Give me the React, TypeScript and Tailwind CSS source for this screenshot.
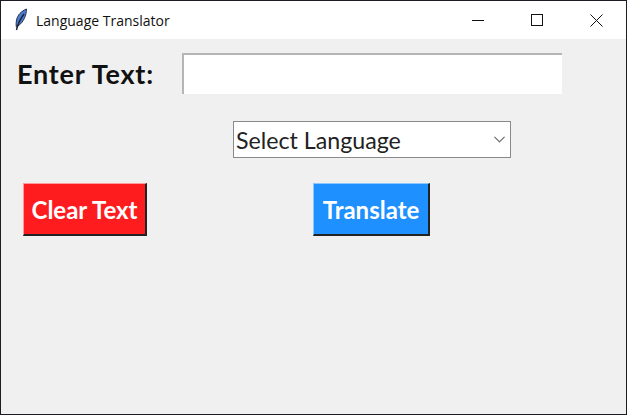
import { ChevronDown } from "lucide-react";

function Feather() {
  return (
    <svg width="16" height="24" viewBox="0 0 16 24">
      <path d="M13.500 1C8.500 3 4.500 7 3.500 12c-.5 2.500-.5 5-.2 7l3-2C10 14 13.500 8 13.500 1z" fill="#4a7bd0" stroke="#2a3450" strokeWidth="1" />
      <path d="M11 6C8 10 5 15 3.500 22" fill="none" stroke="#1c2233" strokeWidth="1.400" />
    </svg>
  );
}

export default function App() {
  return (
    <div className="w-[627px] h-[415px] overflow-hidden flex flex-col border border-[#1c1c24] bg-[#f0f0f0] font-['Lato',sans-serif]">
      {/* title bar */}
      <div className="h-[38px] shrink-0 bg-white flex items-center pl-[12px]">
        <Feather />
        <span className="ml-[7px] text-[14px] text-[#111] font-['Open_Sans',sans-serif]">Language Translator</span>
        <div className="ml-auto flex items-center">
          <svg width="12" height="12" viewBox="0 0 12 12" className="mr-[47px]">
            <path d="M0 6.500h12" stroke="#111" strokeWidth="1" />
          </svg>
          <svg width="12" height="12" viewBox="0 0 12 12" className="mr-[47px]">
            <rect x="0.500" y="0.500" width="11" height="11" fill="none" stroke="#111" strokeWidth="1" />
          </svg>
          <svg width="13" height="13" viewBox="0 0 13 13" className="mr-[23px]">
            <path d="M.5.5l12 12M12.500.5l-12 12" stroke="#111" strokeWidth="1" />
          </svg>
        </div>
      </div>

      {/* form */}
      <div className="flex flex-col pt-[14px]">
        <div className="flex items-center">
          <span className="ml-[16px] w-[165px] text-[27px] tracking-[0.8px] leading-[32px] font-bold text-[#111]">Enter Text:</span>
          <div className="w-[380px] h-[41px] bg-white border-t-2 border-l-2 border-[#b5b5b5]" />
        </div>

        <div className="ml-[232px] mt-[27px] w-[278px] h-[37px] bg-white border border-[#8a8a8a] flex items-center pl-[2px] pr-[1px]">
          <span className="text-[23.2px] leading-[30px] text-[#222]">Select Language</span>
          <ChevronDown size={19} strokeWidth={1.4} className="ml-auto text-[#666]" />
        </div>

        <div className="flex mt-[25px]">
          <button className="ml-[22px] w-[124px] h-[53px] pt-[1px] bg-[#ff1c1f] border-t border-l border-t-[#ff9a9a] border-l-[#ff9a9a] border-r-2 border-b-2 border-r-[#222] border-b-[#222] text-white font-bold text-[24px]">
            Clear Text
          </button>
          <button className="ml-[166px] w-[117px] h-[53px] pt-[1px] bg-[#1e90ff] border-t border-l border-t-[#8cc6ff] border-l-[#8cc6ff] border-r-2 border-b-2 border-r-[#222] border-b-[#222] text-white font-bold text-[24px]">
            Translate
          </button>
        </div>
      </div>
    </div>
  );
}
